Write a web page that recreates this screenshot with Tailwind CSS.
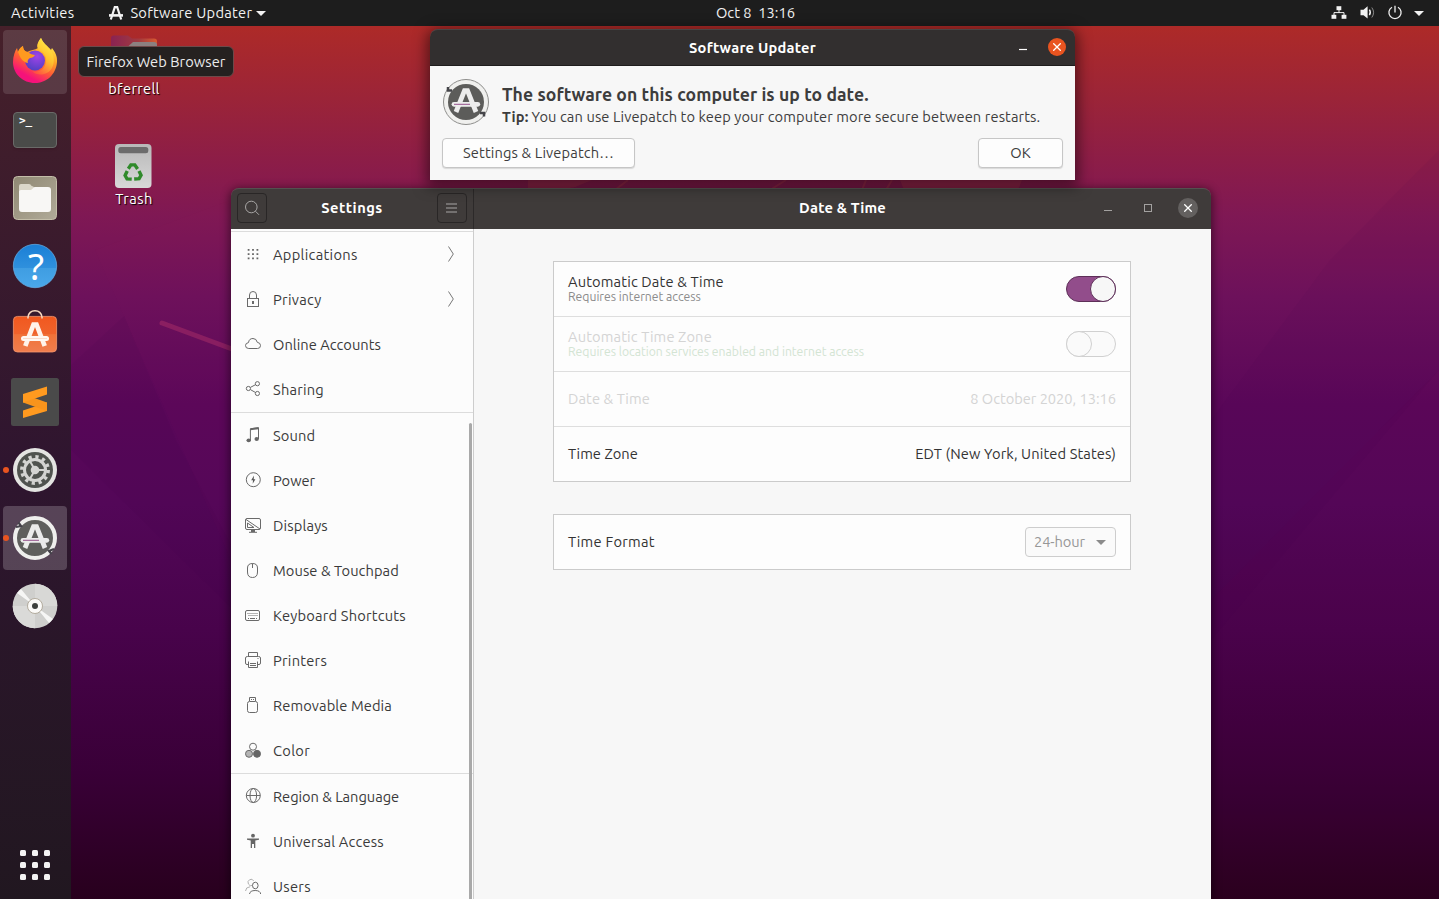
<!DOCTYPE html>
<html lang="en">
<head>
<meta charset="utf-8">
<title>Ubuntu Desktop</title>
<script src="https://cdn.jsdelivr.net/npm/@tailwindcss/browser@4"></script>
</head>
<body class="relative flex h-[899px] w-[1439px] flex-col overflow-hidden bg-[#3a0038] font-['Ubuntu','Noto_Sans',sans-serif] text-[14.67px] leading-[20px] text-[#3d3d3d]">

<!-- Shared symbols -->
<svg class="absolute h-0 w-0" aria-hidden="true">
  <defs>
    <symbol id="updater-a" viewBox="0 0 48 48">
      <path d="M14 34 L22.500 12.6 H25.500 L34 34" fill="none" stroke="currentColor" stroke-width="4.8"/>
      <rect x="9.6" y="23.9" width="28.6" height="4.8" rx="2.4" fill="currentColor"/>
      <path d="M12 26.300 H28" stroke="#8a4080" stroke-width=".9"/>
    </symbol>
  </defs>
</svg>

<!-- Wallpaper -->
<svg class="absolute inset-0 h-full w-full" viewBox="0 0 1439 899" preserveAspectRatio="none">
  <defs>
    <linearGradient id="wall" x1="0" y1="0" x2="0" y2="1">
      <stop offset="0.03" stop-color="#ad2a28"/><stop offset="0.11" stop-color="#9b2438"/>
      <stop offset="0.2" stop-color="#881b4c"/><stop offset="0.24" stop-color="#7f1854"/>
      <stop offset="0.33" stop-color="#6d115b"/><stop offset="0.45" stop-color="#5a0759"/>
      <stop offset="0.56" stop-color="#530758"/><stop offset="0.7" stop-color="#48034b"/>
      <stop offset="0.86" stop-color="#390037"/><stop offset="1" stop-color="#28001d"/>
    </linearGradient>
  </defs>
  <rect width="1439" height="899" fill="url(#wall)"/>
  <path d="M71 365 L124 316 L176 440 L231 545 V608 L71 450 Z" fill="#38004a" fill-opacity=".07"/>
  <path d="M124 316 L95 250 L231 200 V560 Z" fill="#a0205a" fill-opacity=".03"/>
  <path d="M1439 150 L1330 260 L1211 420 V640 L1439 370 Z" fill="#38004a" fill-opacity=".05"/>
  <path d="M1211 600 L1439 370 V900 H1211 Z" fill="#7a0a58" fill-opacity=".04"/>
  <path d="M162 323 L232 349" stroke="#a02a66" stroke-opacity=".6" stroke-width="5" stroke-linecap="round"/>
  <path d="M528 180 H592 L575 187 L560 190 H528 Z M900 180 H1022 L1018 190 H904 Z" fill="#a3304a" fill-opacity=".5"/>
  <path d="M615 190 L628 180 M770 190 L786 180 M862 190 L866 180 M886 190 L892 180" stroke="#a3304a" stroke-opacity=".6" stroke-width="2"/>
</svg>

<!-- Top panel -->
<header class="relative flex h-[26px] shrink-0 items-center bg-[#1d1d1d] text-[#f2f2f2]">
  <div class="flex w-[716px] items-center pl-[11px]">
    <span class="tracking-[0.33px]">Activities</span>
    <div class="ml-[35px] flex items-center">
      <svg class="mr-[7px] h-[14px] w-[14px]" viewBox="0 0 14 14" fill="none" stroke="currentColor" stroke-width="2.2"><path d="M1.8 13.5 L5.8 1.2 H8.2 L12.2 13.5"/><path d="M0 9.4 H14" stroke-width="2.6"/></svg>
      <span class="tracking-[0.27px]">Software Updater</span>
      <svg class="ml-[4px] h-[5px] w-[10px]" viewBox="0 0 10 5"><path d="M0 0 H10 L5 5 Z" fill="currentColor"/></svg>
    </div>
  </div>
  <span class="-mt-px whitespace-pre">Oct 8  13:16</span>
  <div class="flex flex-1 items-center justify-end pr-[15px]">
    <svg class="h-4 w-4" viewBox="0 0 16 16" fill="currentColor"><rect x="5.5" y="1.2" width="4.8" height="4"/><rect x="0.5" y="9.8" width="4.8" height="4"/><rect x="10.6" y="9.8" width="4.8" height="4"/><path d="M8 5 V7.8 M3 10 V7.6 H13 V10" fill="none" stroke="currentColor"/></svg>
    <svg class="ml-[13px] h-4 w-4" viewBox="0 0 16 16" fill="none" stroke="currentColor"><path d="M0.5 4.800 H3.5 L7.6 1.2 V13.600 L3.5 10.2 H0.5 Z" fill="currentColor" stroke="none"/><path d="M9.4 4.600 Q11.2 7.400 9.4 10.2" stroke-width="1.4"/><path d="M11.8 2.500 Q15.4 7.500 11.8 12.500" stroke-opacity=".5"/></svg>
    <svg class="ml-[11px] h-4 w-4" viewBox="0 0 16 16" fill="none" stroke="currentColor" stroke-width="1.3"><path d="M5 2.2 A6.1 6.1 0 1 0 11 2.2"/><path d="M8 0.8 V7.6"/></svg>
    <svg class="ml-[11px] h-[5px] w-[10px]" viewBox="0 0 10 5"><path d="M0 0 H10 L5 5 Z" fill="currentColor"/></svg>
  </div>
</header>

<!-- Desktop icons -->
<div class="absolute left-[94px] top-[32px] flex w-[80px] flex-col items-center text-white">
  <svg class="mr-px h-12 w-12" viewBox="0 0 48 48">
    <defs><linearGradient id="fold"><stop offset="0" stop-color="#8a2352"/><stop offset=".6" stop-color="#a23a3f"/><stop offset="1" stop-color="#d85a30"/></linearGradient></defs>
    <path d="M1 6 Q1 3.5 3.5 3.5 H18 L22 6.5 H44 Q47 6.5 47 9 V42 Q47 45 44 45 H4 Q1 45 1 42 Z" fill="url(#fold)"/>
    <path d="M1 17 Q1 14.500 4 14.500 H18 L23 10 H44 Q47 10 47 13 V42 Q47 45 44 45 H4 Q1 45 1 42 Z" fill="#8c8080"/>
  </svg>
  <span class="mt-[-1px] tracking-[0.3px] [text-shadow:1px_1px_1px_#000]">bferrell</span>
</div>
<div class="absolute left-[94px] top-[142px] flex w-[80px] flex-col items-center text-white">
  <svg class="mr-[2px] h-12 w-12" viewBox="0 0 48 48">
    <defs><linearGradient id="bin" x1="0" y1="0" x2="0" y2="1"><stop offset="0" stop-color="#b8b8b8"/><stop offset="1" stop-color="#d8d8d8"/></linearGradient></defs>
    <rect x="6" y="2" width="36.500" height="44" rx="4" fill="url(#bin)"/>
    <rect x="9.300" y="5" width="30" height="6.200" rx="2.500" fill="#6c6c6c"/>
    <g fill="none" stroke="#2f8a2a" stroke-width="3.400">
      <path d="M19.300 26.800 L21.900 22.900 H25.800 L28.600 27"/>
      <path d="M19.300 26.800 L21.900 22.900 H25.800 L28.600 27" transform="rotate(120 24 31)"/>
      <path d="M19.300 26.800 L21.900 22.900 H25.800 L28.600 27" transform="rotate(240 24 31)"/>
    </g>
  </svg>
  <span class="mt-[-1px] tracking-[0.4px] [text-shadow:1px_1px_1px_#000]">Trash</span>
</div>

<!-- Dock -->
<nav class="relative flex w-[71px] flex-1 flex-col gap-1 bg-linear-to-b from-[#46202a] via-[#2f152f] to-[#211720] pb-[2px] pl-[3px] pt-1">
  <div class="flex size-16 items-center justify-center rounded bg-white/12">
    <svg class="size-12" viewBox="0 0 48 48">
      <defs>
        <linearGradient id="fx1" x1=".8" y1="0" x2=".25" y2="1"><stop offset=".05" stop-color="#fff44f"/><stop offset=".35" stop-color="#ffa726"/><stop offset=".6" stop-color="#ff5a36"/><stop offset=".85" stop-color="#f5127a"/></linearGradient>
        <linearGradient id="fx2" x1=".8" y1="0" x2=".3" y2="1"><stop offset="0" stop-color="#fff24a"/><stop offset=".5" stop-color="#ffc02e"/><stop offset="1" stop-color="#ff5540"/></linearGradient>
        <radialGradient id="fx3" cx=".6" cy=".3" r=".8"><stop offset="0" stop-color="#a043e8"/><stop offset="1" stop-color="#4a3fc0"/></radialGradient>
      </defs>
      <path d="M30 0 C32 5 37 8 40 12 L41 10 C44 14 46.500 18 46 24 C45 37 35 45 24 45 C12 45 2 36 2 24 C2 18 4 13 6 10 L7 14 C8 11 10 9 12 8 C12 11 13 13 16 14 C20 12 24 12 27 10 C26 6 28 3 30 0 Z" fill="url(#fx1)"/>
      <circle cx="24" cy="22.500" r="10" fill="url(#fx3)"/>
      <path d="M30 0 C26 5 25 9 28 12 C33 14 36 19 35 24 C34 31 28 35 21 33 C27 39 37 37 41 30 C44 24 43 17 40 13 C36 8 32 6 30 0 Z" fill="url(#fx2)"/>
      <path d="M7 14 C8 11 10 9 12 8 C12 11 14 14 17 14 C19 16 22 17 24 17 C23 19 21 20 19 20 C17 21 16 23 17 25 C11 24 9 19 7 14 Z" fill="#ff9a1f"/>
    </svg>
  </div>
  <div class="flex size-16 items-center justify-center">
    <div class="flex h-9 w-11 items-start rounded-[4px] border border-[#6a6a68] bg-[#4a4b49] pl-[5px] pt-[1px] font-['DejaVu_Sans_Mono','Liberation_Mono',monospace] text-[11px] font-bold leading-[14px] text-white shadow">&gt;_</div>
  </div>
  <div class="flex size-16 items-center justify-center">
    <svg class="size-12" viewBox="0 0 48 48"><defs><linearGradient id="fl" x2="1" y2="1"><stop offset="0" stop-color="#8f8873"/><stop offset="1" stop-color="#b0aa98"/></linearGradient></defs><rect x="2.500" y="2.500" width="43" height="43" rx="4" fill="url(#fl)" stroke="#c3bda8"/><path d="M8 12 Q8 10 10 10 H18 Q20 10 20 11.500 L23 13 V20 H8 Z" fill="#dcd8ca"/><path d="M8 17.500 Q8 16 10 16 H20 L23.500 13 H37 Q40 13 40 16 V35 Q40 38 37 38 H11 Q8 38 8 35 Z" fill="#f8f7f5"/></svg>
  </div>
  <div class="flex size-16 items-center justify-center">
    <svg class="size-12 overflow-visible" viewBox="0 0 48 48"><defs><linearGradient id="hp" x2="0" y2="1"><stop offset="0" stop-color="#1a7fd6"/><stop offset=".54" stop-color="#2f90dd"/><stop offset=".55" stop-color="#3f9de2"/><stop offset="1" stop-color="#4aa8ea"/></linearGradient></defs><circle cx="24" cy="24" r="21.700" fill="url(#hp)" stroke="#67b2ea" stroke-width=".7"/><text x="25" y="37.500" text-anchor="middle" font-size="37" fill="#fff" class="font-['Noto_Sans',sans-serif]">?</text></svg>
  </div>
  <div class="flex size-16 items-center justify-center">
    <svg class="size-12" viewBox="0 0 48 48"><defs><linearGradient id="sw" x2="0" y2="1"><stop offset="0" stop-color="#f1581f"/><stop offset=".5" stop-color="#f0632c"/><stop offset=".51" stop-color="#f07238"/><stop offset="1" stop-color="#f07e4e"/></linearGradient></defs><rect x="2.400" y="6.400" width="43.200" height="35.600" rx="4" fill="url(#sw)" stroke="#f4976e" stroke-width=".8"/><path d="M17 8.500 V7 Q18 .800 24 .800 Q30 .800 31 7 V8.500" fill="none" stroke="#f7d9c0" stroke-width="1.500"/><path d="M14.300 36 L22.500 14.500 H25.500 L33.700 36" fill="none" stroke="#fff3ea" stroke-width="4.700"/><rect x="10" y="26" width="28" height="5" rx="2.500" fill="#fff8f2"/><path d="M12 28.500 H36" stroke="#f9d3bf" stroke-width=".8"/></svg>
  </div>
  <div class="flex size-16 items-center justify-center">
    <svg class="size-12" viewBox="0 0 48 48"><rect width="48" height="48" rx="2.500" fill="#4a4a4a"/><path d="M12 32.500 L36 24.500 V33 L12 40 Z" fill="#ff9a1f"/><path d="M12 16 L36 24.500 V33 L12 24.500 Z" fill="#f8941c"/><path d="M12 16 L36 8.500 V16.500 L12 24.500 Z" fill="#ff9a1f"/></svg>
  </div>
  <div class="relative flex size-16 items-center justify-center">
    <span class="absolute left-0 top-[29px] size-[6px] rounded-full bg-[#e95420]"></span>
    <svg class="size-12" viewBox="0 0 48 48"><circle cx="24" cy="24" r="22" fill="#e4e4e2"/><circle cx="24" cy="24" r="18" fill="#50534f"/><circle cx="24" cy="24" r="13.200" fill="none" stroke="#d4d4d2" stroke-width="3.500" stroke-dasharray="3.200 3.710"/><circle cx="24" cy="24" r="10.500" fill="none" stroke="#d4d4d2" stroke-width="3"/><circle cx="24" cy="24" r="4.300" fill="#d4d4d2"/><path d="M24 24 H34 M24 24 L19 15.300 M24 24 L19 32.700" stroke="#d4d4d2" stroke-width="2"/></svg>
  </div>
  <div class="relative flex size-16 items-center justify-center rounded bg-white/20">
    <span class="absolute left-0 top-[29px] size-[6px] rounded-full bg-[#e95420]"></span>
    <svg class="size-12 text-[#ebebeb]" viewBox="0 0 48 48"><circle cx="24" cy="24" r="20" fill="#5f5f5d" stroke="#efefed" stroke-width="4"/><path d="M5 13 L10 12 L7.500 8.500 M43 35 L38 37 L40.500 40" fill="none" stroke="#45424a" stroke-width="2.200"/><use href="#updater-a" width="48" height="48"/></svg>
  </div>
  <div class="flex size-16 items-center justify-center">
    <svg class="size-12" viewBox="0 0 48 48"><circle cx="24" cy="24" r="22.300" fill="#cfcfcd"/><path d="M24 24 V1.700 A22.300 22.300 0 0 1 46.300 24 Z" fill="#d8d8d6"/><path d="M24 24 V46.300 A22.300 22.300 0 0 1 1.700 24 Z" fill="#dadad8"/><path d="M24 24 L6 11 L10 7 Z M24 24 L42 37 L38 41 Z" fill="#f6f6f5"/><circle cx="24" cy="24" r="7.500" fill="#fbfaf8" stroke="#a49c8c" stroke-width=".8"/><circle cx="24" cy="24" r="3" fill="#3d403d"/></svg>
  </div>
  <div class="mt-auto flex size-16 items-center justify-center">
    <svg class="size-[30px]" viewBox="0 0 30 30" fill="#f4f2f3"><rect width="6" height="6" rx="1.500"/><rect x="12" width="6" height="6" rx="1.500"/><rect x="24" width="6" height="6" rx="1.500"/><rect y="12" width="6" height="6" rx="1.500"/><rect x="12" y="12" width="6" height="6" rx="1.500"/><rect x="24" y="12" width="6" height="6" rx="1.500"/><rect y="24" width="6" height="6" rx="1.500"/><rect x="12" y="24" width="6" height="6" rx="1.500"/><rect x="24" y="24" width="6" height="6" rx="1.500"/></svg>
  </div>
</nav>

<!-- Dock tooltip -->
<div class="absolute left-[78px] top-[46px] flex h-[31px] w-[156px] items-center justify-center rounded-[6px] border border-[#6d4a4a] bg-[#252120] text-[#ececec]"><span class="tracking-[0.06px]">Firefox Web Browser</span></div>

<!-- Settings window -->
<main class="absolute left-[231px] top-[188px] flex h-[711px] w-[980px] flex-col rounded-t-[8px] shadow-[0_2px_8px_2px_rgba(0,0,0,0.45)]">
  <div class="flex h-[41px] shrink-0 overflow-hidden rounded-t-[8px] border-t border-[#55504f] bg-[#3f3b3a] font-bold text-white">
    <div class="flex w-[243px] items-center justify-between border-r border-[#2c2929] pb-[2px] pl-[6px] pr-[6px]">
      <div class="flex size-[30px] items-center justify-center rounded-[4px] border border-[#292626]"><svg class="size-4" viewBox="0 0 16 16" fill="none" stroke="#a8a6a5"><circle cx="7.300" cy="7" r="5.800"/><path d="M11.400 11.200 L15 14.800"/></svg></div>
      <span class="tracking-[0.5px]">Settings</span>
      <div class="flex size-[30px] items-center justify-center rounded-[4px] border border-[#292626]"><svg class="mr-px h-[11px] w-[11px]" viewBox="0 0 11 11" stroke="#a8a6a5"><path d="M0 1 H11 M0 5 H11 M0 9 H11"/></svg></div>
    </div>
    <div class="relative flex flex-1 items-center justify-center pb-[2px]">
      <span class="tracking-[0.2px]">Date &amp; Time</span>
      <div class="absolute right-[13px] top-[9px] flex items-center">
        <svg class="h-5 w-2" viewBox="0 0 8 20"><path d="M0 12.500 H8" stroke="#a3a1a0"/></svg>
        <svg class="ml-8 h-5 w-2" viewBox="0 0 8 20"><rect x=".5" y="6.500" width="7" height="7" fill="none" stroke="#a3a1a0"/></svg>
        <div class="ml-[26px] flex size-5 items-center justify-center rounded-full bg-[#63605f]"><svg class="size-2" viewBox="0 0 8 8"><path d="M.3 .3 L7.700 7.700 M7.700 .3 L.3 7.700" stroke="#fff" stroke-width="1.300"/></svg></div>
      </div>
    </div>
  </div>
  <div class="flex min-h-0 flex-1">
    <aside class="relative flex w-[243px] flex-col overflow-hidden border-r border-[#cdcdcd] bg-[#fcfcfc] pt-[2px] text-[#3a3a3a] [&_svg]:mb-px [&_svg]:shrink-0">
      <ul class="border-t border-[#dcdcdc]">
        <li class="flex h-[45px] items-center gap-3 pl-[14px] pr-[19px]"><svg class="size-4" viewBox="0 0 16 16" fill="#666"><path d="M2.700 3h1.800v1.800h-1.800zM7.100 3h1.800v1.800h-1.800zM11.500 3h1.800v1.800h-1.800zM2.700 7.200h1.800v1.800h-1.800zM7.100 7.200h1.800v1.800h-1.800zM11.500 7.200h1.800v1.800h-1.800zM2.700 11.400h1.800v1.800h-1.800zM7.100 11.400h1.800v1.800h-1.800zM11.500 11.400h1.800v1.800h-1.800z"/></svg><span class="tracking-[0.3px]">Applications</span><svg class="ml-auto h-4 w-[6px]" viewBox="0 0 6 16" fill="none" stroke="#777"><path d="M.5 .5 L5.300 8 L.5 15.500"/></svg></li>
        <li class="flex h-[45px] items-center gap-3 pl-[14px] pr-[19px]"><svg class="size-4" viewBox="0 0 16 16" fill="none" stroke="#6a6a6a"><rect x="2.500" y="7.500" width="11" height="8"/><path d="M4.500 7.500 V4 Q4.500 .5 8 .5 Q11.500 .5 11.500 4 V7.500"/><path d="M8 10 V13" stroke-width="2"/></svg><span class="tracking-[0.3px]">Privacy</span><svg class="ml-auto h-4 w-[6px]" viewBox="0 0 6 16" fill="none" stroke="#777"><path d="M.5 .5 L5.300 8 L.5 15.500"/></svg></li>
        <li class="flex h-[45px] items-center gap-3 pl-[14px]"><svg class="size-4" viewBox="0 0 16 16" fill="none" stroke="#6a6a6a"><path d="M3.800 12.500 Q.5 12.500 .5 9.500 Q.5 7 3.500 6.600 Q4 2.500 8 2.500 Q11.500 2.500 12.300 6.300 Q15.500 6.800 15.500 9.500 Q15.500 12.500 12.500 12.500 Z"/></svg><span class="tracking-[0.03px]">Online Accounts</span></li>
        <li class="flex h-[45px] items-center gap-3 pl-[14px]"><svg class="size-4" viewBox="0 0 16 16" fill="none" stroke="#6a6a6a"><circle cx="12.400" cy="2.700" r="2.100"/><circle cx="3.400" cy="7.500" r="2.100"/><circle cx="12.400" cy="12.500" r="2.100"/><path d="M5.400 6.400 L10.500 3.700 M5.400 8.600 L10.500 11.500"/></svg><span class="tracking-[0.2px]">Sharing</span></li>
      </ul>
      <ul class="border-t border-[#dcdcdc]">
        <li class="flex h-[45px] items-center gap-3 pl-[14px]"><svg class="size-4" viewBox="0 0 16 16" fill="#666"><ellipse cx="3.700" cy="13.300" rx="2.200" ry="1.900"/><ellipse cx="11.700" cy="12" rx="2.200" ry="1.900"/><path d="M5.400 13.500 V1.800 L13.500 .7 V12" fill="none" stroke="#666"/><path d="M5.400 1.300 L13.500 .2 V2.200 L5.400 3.300 Z"/></svg><span class="tracking-[0.1px]">Sound</span></li>
        <li class="flex h-[45px] items-center gap-3 pl-[14px]"><svg class="size-4" viewBox="0 0 16 16" fill="none" stroke="#6a6a6a"><circle cx="8.300" cy="7.700" r="7"/><path d="M9 3.500 L6.200 8.200 H8 L7.700 11.800 L10.400 7.200 H8.700 Z" fill="#555" stroke="none"/></svg><span>Power</span></li>
        <li class="flex h-[45px] items-center gap-3 pl-[14px]"><svg class="size-4" viewBox="0 0 16 16" fill="none" stroke="#6a6a6a"><rect x=".5" y="1.500" width="15" height="11" rx="1.500"/><path d="M1 2.500 L15 12 M2.500 6 V10.500 H9 Z M8 12.500 V15 M4 15.300 H12" /><path d="M6 14 H10" stroke-width="2"/></svg><span class="tracking-[0.15px]">Displays</span></li>
        <li class="flex h-[45px] items-center gap-3 pl-[14px]"><svg class="size-4" viewBox="0 0 16 16" fill="none" stroke="#6a6a6a"><path d="M2.500 6 Q2.500 1.500 7.500 1.500 Q12.500 1.500 12.500 6 V10 Q12.500 15.500 7.500 15.500 Q2.500 15.500 2.500 10 Z M7.500 1.500 V6"/></svg><span class="tracking-[0.07px]">Mouse &amp; Touchpad</span></li>
        <li class="flex h-[45px] items-center gap-3 pl-[14px]"><svg class="size-4" viewBox="0 0 16 16" fill="none" stroke="#6a6a6a"><rect x=".5" y="3.500" width="14" height="10" rx="1.500"/><path d="M2.500 6.500 H13 M3.500 8.500 H13" stroke-dasharray="1 1"/><path d="M3 11.500 H4 M5 11.500 H10 M11 11.500 H12"/></svg><span class="tracking-[0.2px]">Keyboard Shortcuts</span></li>
        <li class="flex h-[45px] items-center gap-3 pl-[14px]"><svg class="size-4" viewBox="0 0 16 16" fill="none" stroke="#6a6a6a"><path d="M3.500 4 V.5 H12.500 V4 M3 12.500 H2 Q.5 12.500 .5 11 V6 Q.5 4.500 2.500 4.500 H13.500 Q15.500 4.500 15.500 6 V11 Q15.500 12.500 14 12.500 H13 M3.500 9.500 V15.500 H12.500 V9.500 M5 11.500 H11 M5 13.500 H11 M12.500 6.500 H13.500"/></svg><span class="tracking-[0.25px]">Printers</span></li>
        <li class="flex h-[45px] items-center gap-3 pl-[14px]"><svg class="size-4" viewBox="0 0 16 16" fill="none" stroke="#6a6a6a"><rect x="2.500" y="4.500" width="10" height="11" rx="2"/><path d="M4.500 4 V.5 H10.500 V4 M6 2.500 H7 M8 2.500 H9"/></svg><span class="tracking-[0.1px]">Removable Media</span></li>
        <li class="flex h-[45px] items-center gap-3 pl-[14px]"><svg class="size-4" viewBox="0 0 16 16" fill="none" stroke="#6a6a6a"><circle cx="8" cy="4.700" r="3.500"/><circle cx="4" cy="11.800" r="3.500" fill="#b4b4b4"/><circle cx="12" cy="11.800" r="3.500" fill="#666"/></svg><span class="tracking-[0.3px]">Color</span></li>
      </ul>
      <ul class="border-t border-[#dcdcdc]">
        <li class="flex h-[45px] items-center gap-3 pl-[14px]"><svg class="size-4" viewBox="0 0 16 16" fill="none" stroke="#6a6a6a"><circle cx="8.300" cy="7.500" r="7"/><ellipse cx="8.300" cy="7.500" rx="3.300" ry="7"/><path d="M1.300 7.500 H15.300"/></svg><span class="tracking-[-0.03px]">Region &amp; Language</span></li>
        <li class="flex h-[45px] items-center gap-3 pl-[14px]"><svg class="size-4" viewBox="0 0 16 16" fill="#666"><circle cx="8" cy="2.700" r="1.900"/><path d="M2 5.500 H14 V6.800 L10.300 7.500 V15 H9 V11 H7 V15 H5.700 V7.500 L2 6.800 Z"/></svg><span class="tracking-[0.2px]">Universal Access</span></li>
        <li class="flex h-[45px] items-center gap-3 pl-[14px]"><svg class="size-4" viewBox="0 0 16 16" fill="none" stroke="#6a6a6a"><path d="M7.500 7.300 A3 3.200 0 1 1 8.700 3 M.5 13 Q.8 9 5 8.800" stroke="#b0b0b0"/><ellipse cx="10.300" cy="7.500" rx="2.800" ry="3.300"/><path d="M4.500 16 Q5 12.500 10.200 12.500 Q15.200 12.500 15.700 16"/></svg><span class="tracking-[0.3px]">Users</span></li>
      </ul>
      <div class="absolute bottom-0 right-px top-[194px] w-[3px] rounded-t bg-[#a9a9a9]"></div>
    </aside>
    <section class="flex flex-1 flex-col gap-8 bg-[#f7f7f7] px-[79px] pt-8 text-[#333]">
      <div class="flex w-[578px] flex-col divide-y divide-[#dedede] border border-[#cbcbcb] bg-[#fdfdfd]">
        <div class="flex h-[55px] items-center justify-between px-[14px]">
          <div class="flex flex-col items-start pb-[2px]"><span class="leading-[17px] tracking-[0.15px]">Automatic Date &amp; Time</span><span class="text-[12.2px] leading-[13px] text-[#8b8b8b]">Requires internet access</span></div>
          <div class="flex h-[26px] w-[50px] justify-end rounded-full border border-[#5d2f58] bg-[#924d8b]"><div class="-my-px -mr-px size-[26px] rounded-full border border-[#5d2f58] bg-[#f7f7f7]"></div></div>
        </div>
        <div class="flex h-[55px] items-center justify-between px-[14px] text-[#d4d4d4]">
          <div class="flex flex-col items-start pb-[2px]"><span class="leading-[17px] tracking-[0.14px]">Automatic Time Zone</span><span class="text-[12.2px] leading-[13px] text-[#d3e4d3]">Requires location services enabled and internet access</span></div>
          <div class="flex h-[26px] w-[50px] rounded-full border border-[#d0d0d0] bg-[#fafafa]"><div class="-my-px -ml-px size-[26px] rounded-full border border-[#d0d0d0] bg-[#fafafa]"></div></div>
        </div>
        <div class="flex h-[55px] items-center justify-between px-[14px] text-[#d4d4d4]"><span class="tracking-[0.1px]">Date &amp; Time</span><span class="tracking-[-0.03px]">8 October 2020, 13:16</span></div>
        <div class="flex h-[54px] items-center justify-between px-[14px]"><span class="tracking-[0.06px]">Time Zone</span><span class="tracking-[0.12px]">EDT (New York, United States)</span></div>
      </div>
      <div class="flex h-[56px] w-[578px] items-center justify-between border border-[#cbcbcb] bg-[#fdfdfd] px-[14px]">
        <span class="tracking-[0.26px]">Time Format</span>
        <div class="flex h-[30px] w-[91px] items-center justify-between rounded-[4px] border border-[#cdcdcd] bg-[#fafafa] pl-2 pr-[9px] text-[#979797]"><span class="tracking-[-0.1px]">24-hour</span><svg class="h-[5px] w-[10px]" viewBox="0 0 10 5"><path d="M0 0 H10 L5 5 Z" fill="#8b8b8b"/></svg></div>
      </div>
    </section>
  </div>
</main>

<!-- Software Updater window -->
<section class="absolute left-[430px] top-[29px] flex h-[151px] w-[645px] flex-col rounded-t-[8px] shadow-[0_3px_14px_3px_rgba(0,0,0,0.5)]">
  <div class="relative flex h-[37px] shrink-0 items-center justify-center rounded-t-[8px] border-b border-t border-b-[#1f1d1d] border-t-[#494545] bg-[#322f2f] font-bold text-white">
    <span class="tracking-[0.24px]">Software Updater</span>
    <div class="absolute right-[9px] top-[7px] flex items-center">
      <svg class="h-5 w-2" viewBox="0 0 8 20"><path d="M0 12.500 H8" stroke="#fff" stroke-width="1.200"/></svg>
      <div class="ml-[21px] flex size-[18px] items-center justify-center rounded-full bg-[#e95420]"><svg class="size-2" viewBox="0 0 8 8"><path d="M.3 .3 L7.700 7.700 M7.700 .3 L.3 7.700" stroke="#fff" stroke-width="1.300"/></svg></div>
    </div>
  </div>
  <div class="flex flex-1 flex-col bg-[#f7f7f7] px-3 pt-3">
    <div class="flex h-12 items-start gap-3">
      <svg class="size-12 text-[#ececec]" viewBox="0 0 48 48"><circle cx="24" cy="24" r="22.500" fill="#f0f0ee" stroke="#8e8e8c"/><circle cx="24" cy="24" r="18" fill="#5c5c5a"/><path d="M6 9 V12.500 H10 M42 38.500 V35 H38" fill="none" stroke="#45454a" stroke-width="2.500"/><use href="#updater-a" width="48" height="48"/></svg>
      <div class="flex flex-col items-start pt-[5px]">
        <span class="whitespace-nowrap text-[17.6px] font-bold leading-[24px] tracking-[0.06px]">The software on this computer is up to date.</span>
        <div class="flex gap-[3px] whitespace-nowrap"><span class="font-bold tracking-[0.2px]">Tip:</span><span class="tracking-[0.1px]">You can use Livepatch to keep your computer more secure between restarts.</span></div>
      </div>
    </div>
    <div class="mt-3 flex justify-between">
      <button class="h-[30px] w-[193px] rounded-[4px] border border-[#c6c6c6] bg-[#fdfdfd] shadow-[0_1px_1px_rgba(0,0,0,0.12)]"><span class="tracking-[0.13px]">Settings &amp; Livepatch…</span></button>
      <button class="h-[30px] w-[85px] rounded-[4px] border border-[#c6c6c6] bg-[#fdfdfd] shadow-[0_1px_1px_rgba(0,0,0,0.12)]"><span>OK</span></button>
    </div>
  </div>
</section>
</body>
</html>
